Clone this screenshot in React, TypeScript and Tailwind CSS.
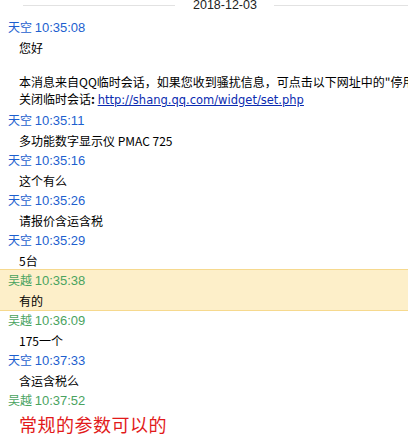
import React from 'react';

interface Message {
  name: string;
  time: string;
  self: boolean;
  lines: React.ReactNode[];
  highlight?: boolean;
  big?: boolean;
}

const messages: Message[] = [
  {
    name: '天空',
    time: '10:35:08',
    self: false,
    lines: [
      '您好',
      '\u00a0',
      '本消息来自QQ临时会话，如果您收到骚扰信息，可点击以下网址中的"停用"按钮',
      <>
        关闭临时会话<span className="font-bold">:</span>{' '}
        <span className="text-[#0b2bb0] underline font-['DejaVu_Sans',sans-serif] text-[11.5px]">
          http://shang.qq.com/widget/set.php
        </span>
      </>,
    ],
  },
  { name: '天空', time: '10:35:11', self: false, lines: ['多功能数字显示仪 PMAC 725'] },
  { name: '天空', time: '10:35:16', self: false, lines: ['这个有么'] },
  { name: '天空', time: '10:35:26', self: false, lines: ['请报价含运含税'] },
  { name: '天空', time: '10:35:29', self: false, lines: ['5台'] },
  { name: '吴越', time: '10:35:38', self: true, lines: ['有的'], highlight: true },
  { name: '吴越', time: '10:36:09', self: true, lines: ['175一个'] },
  { name: '天空', time: '10:37:33', self: false, lines: ['含运含税么'] },
  { name: '吴越', time: '10:37:52', self: true, lines: ['常规的参数可以的'], big: true },
];

const App: React.FC = () => {
  return (
    <div className="w-[408px] h-[440px] overflow-hidden bg-white font-['Noto_Sans_CJK_SC',sans-serif] text-[12px] text-black">
      {/* Date divider */}
      <div className="flex items-start h-[17px]">
        <div className="ml-[23px] mt-[5px] w-[152px] h-px bg-[#e2e2e2]"></div>
        <div className="ml-[18px] -mt-[2px] leading-[14px] text-[#222] font-['Liberation_Sans',sans-serif] text-[12.5px] whitespace-nowrap">
          2018-12-03
        </div>
        <div className="ml-[17px] mt-[5px] flex-1 h-px bg-[#e2e2e2]"></div>
      </div>

      {messages.map((m, idx) => (
        <div
          key={idx}
          className={m.highlight ? 'bg-[#fdefc9] border-y border-[#f6d98e] -my-px relative' : ''}
        >
          <div
            className={`h-5 leading-5 pl-[8px] whitespace-nowrap ${
              m.self ? 'text-[#4aa35f]' : 'text-[#1d5fcf]'
            }`}
          >
            {m.name} <span className="font-['Liberation_Sans',sans-serif] text-[13px]">{m.time}</span>
          </div>
          <div className="pt-[2px] pb-px pl-[19px]">
            {m.lines.map((line, i) => (
              <div
                key={i}
                className={
                  m.big
                    ? 'leading-[24px] text-[18px] tracking-[0.5px] text-[#e21a1a] whitespace-nowrap'
                    : 'leading-[17px] whitespace-nowrap'
                }
              >
                {line}
              </div>
            ))}
          </div>
        </div>
      ))}
    </div>
  );
};

export default App;
